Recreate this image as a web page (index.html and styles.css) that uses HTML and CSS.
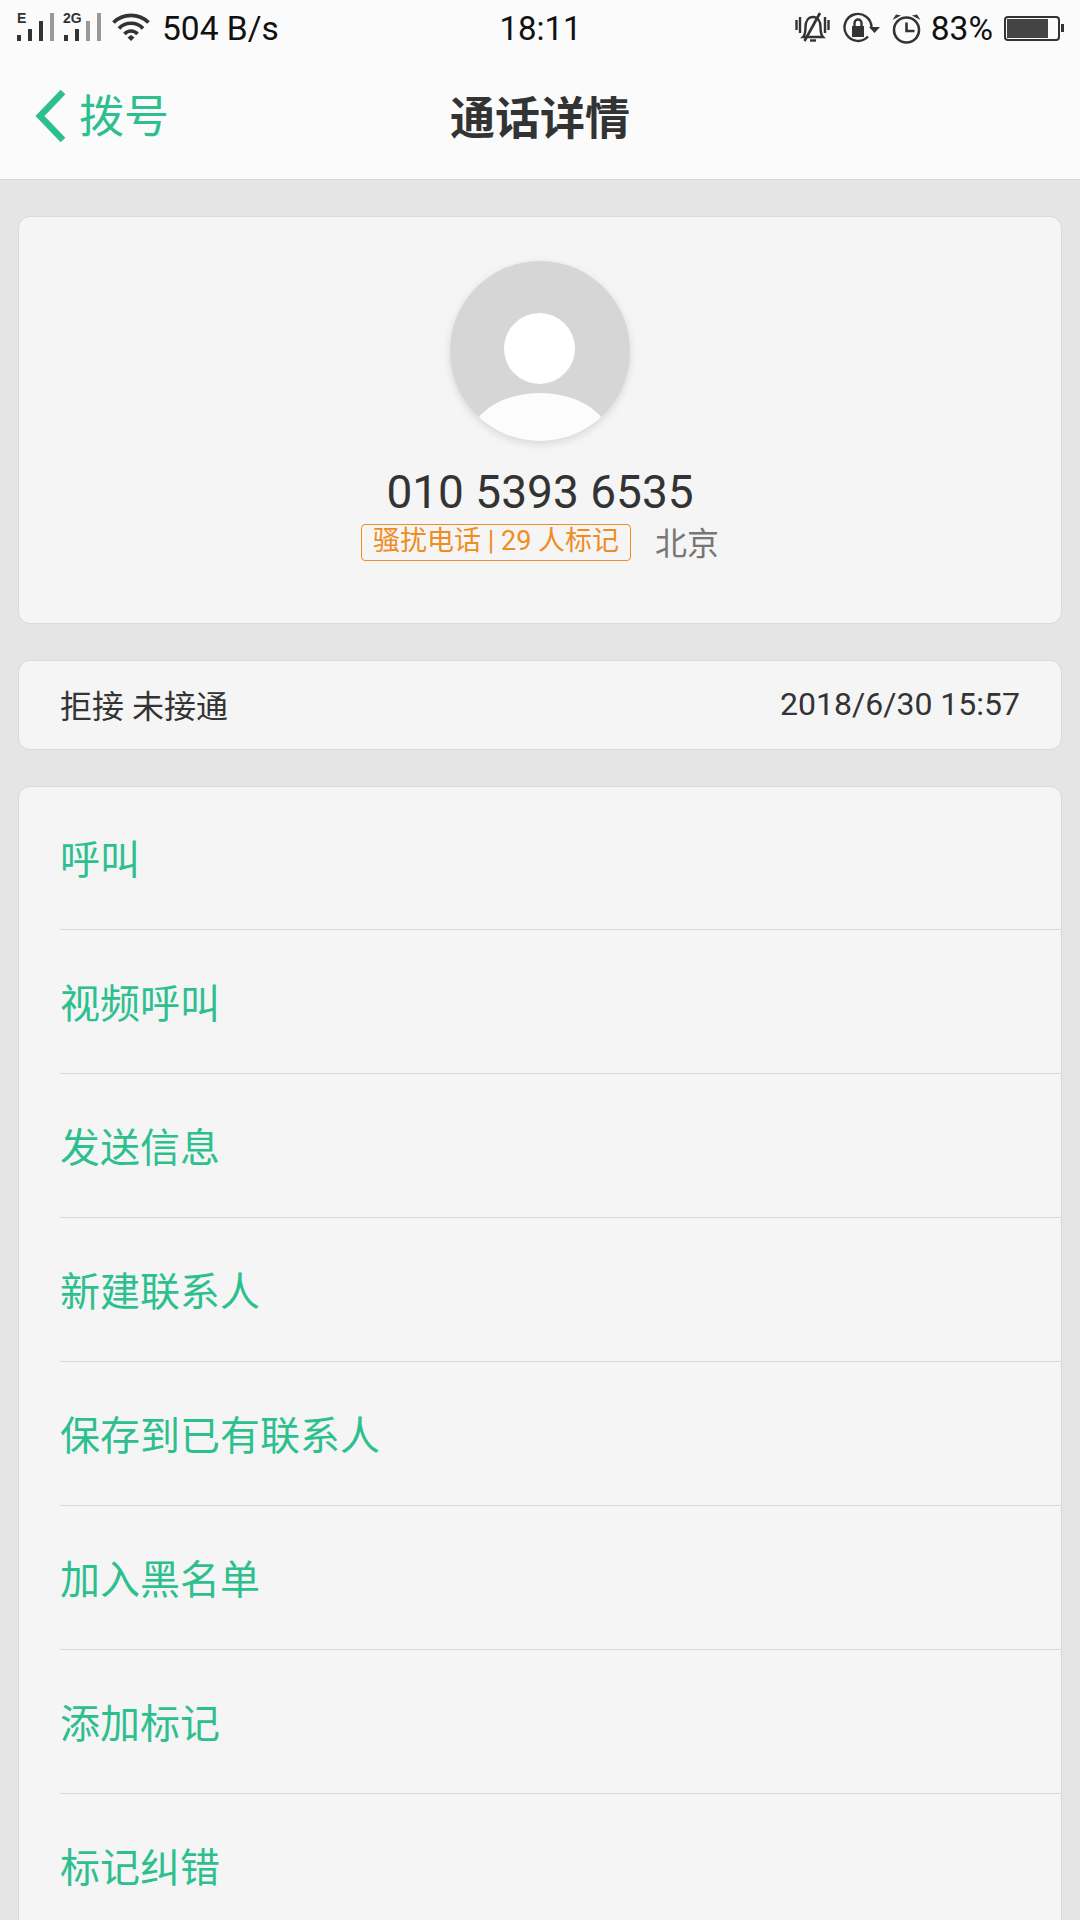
FILE: index.html
```html
<!DOCTYPE html>
<html lang="zh-CN">
  <head>
    <meta charset="utf-8">
    <title>通话详情</title>
    <link rel="stylesheet" href="styles.css">
  </head>
  <body>
    <div class="top">
      <div class="status">
        <div class="status-left">
          <svg width="38" height="40" viewBox="0 -5 38 40">
            <text x="0" y="10" class="sig-label">E</text>
            <rect x="0" y="22" width="4" height="6" fill="#333"/>
            <rect x="11" y="16" width="4" height="12" fill="#333"/>
            <rect x="22" y="8" width="4" height="20" fill="#333"/>
            <rect x="33" y="0" width="4" height="28" fill="#999"/>
          </svg>
          <svg class="sig2" width="38" height="40" viewBox="0 -5 38 40">
            <text x="0" y="10" class="sig-label">2G</text>
            <rect x="1" y="22" width="4" height="6" fill="#333"/>
            <rect x="12" y="16" width="4" height="12" fill="#333"/>
            <rect x="23" y="8" width="4" height="20" fill="#999"/>
            <rect x="34" y="0" width="4" height="28" fill="#999"/>
          </svg>
          <svg class="wifi" width="38" height="30" viewBox="0 0 38 30" fill="none" stroke="#333" stroke-width="3.600">
            <path d="M1.500 9.500C11 0 27 0 36.500 9.500"/>
            <path d="M7 15.500C13 8.500 25 8.500 31 15.500"/>
            <path d="M12.500 21C16 17 22 17 25.500 21"/>
            <path d="M15.500 24.500L19 22L22.500 24.500L19 28Z" fill="#333" stroke="none"/>
          </svg>
          <span class="speed">504 B/s</span>
        </div>
        <span class="clock">18:11</span>
        <div class="status-right">
          <svg width="36" height="32" viewBox="0 0 36 32" fill="none" stroke="#333" stroke-width="2.400">
            <path d="M1.500 8v10M5 5v16M30 5v16M33.500 8v10"/>
            <path d="M8 25c2-2 2.500-5 2.500-10 0-6 3-10 7.500-10s7.500 4 7.500 10c0 5 .5 8 2.500 10z"/>
            <path d="M9.500 29L25 1" stroke-width="2.600"/>
            <path d="M15 28.500h6"/>
          </svg>
          <svg class="rot" width="37" height="32" viewBox="0 0 37 32" fill="none" stroke="#333" stroke-width="2.400">
            <path d="M28.500 15A13.500 13.500 0 1 0 25 24.500"/>
            <path d="M26 15h11l-5.500 6z" fill="#333" stroke="none"/>
            <rect x="9" y="14" width="12" height="11" fill="#333" stroke="none"/>
            <path d="M11.500 14v-3a3.500 3.500 0 0 1 7 0v3"/>
          </svg>
          <svg class="alarm" width="32" height="32" viewBox="0 0 32 32" fill="none" stroke="#333" stroke-width="2.600">
            <circle cx="15.500" cy="18" r="12.500"/>
            <path d="M15.500 10.500v8.500h8"/>
            <path d="M1.500 8l3.500-5.500 5 1zM29.500 8l-3.500-5.500-5 1z" fill="#333" stroke="none"/>
          </svg>
          <span class="percent">83%</span>
          <div class="battery"><div class="battery-fill"></div></div>
          <div class="battery-tip"></div>
        </div>
      </div>
      <div class="nav">
        <div class="back">
          <svg width="32" height="54" viewBox="0 0 32 54" fill="none" stroke="#2dc08e" stroke-width="6.500">
            <path d="M29 3L6 27l23 24"/>
          </svg>
          <span class="back-text">拨号</span>
        </div>
        <h1>通话详情</h1>
      </div>
    </div>

    <div class="content">
      <div class="card profile">
        <div class="avatar">
          <div class="avatar-head"></div>
          <div class="avatar-body"></div>
        </div>
        <div class="number">010 5393 6535</div>
        <div class="tags">
          <span class="tag">骚扰电话 | 29 人标记</span>
          <span class="place">北京</span>
        </div>
      </div>

      <div class="card record">
        <span>拒接 未接通</span>
        <span class="date">2018/6/30 15:57</span>
      </div>

      <div class="card actions">
        <div class="action">呼叫</div>
        <div class="action">视频呼叫</div>
        <div class="action">发送信息</div>
        <div class="action">新建联系人</div>
        <div class="action">保存到已有联系人</div>
        <div class="action">加入黑名单</div>
        <div class="action">添加标记</div>
        <div class="action">标记纠错</div>
      </div>
    </div>
  </body>
</html>
```

FILE: styles.css
```css
* {
  box-sizing: border-box;
}

html,
body {
  height: 1920px;
}

body {
  margin: 0;
  overflow: hidden;
  background-color: #e5e5e5;
  color: #333;
  font-family: Roboto, "Noto Sans CJK SC", sans-serif;
}

.top {
  height: 180px;
  background-color: #fbfbfb;
  border-bottom: 1px solid #d6d6d6;
}

.status {
  height: 56px;
  padding: 0 16px 0 17px;
  display: grid;
  grid-template-columns: 1fr auto 1fr;
  align-items: center;
}

.status-left,
.status-right {
  display: flex;
  align-items: center;
}

.status-right {
  justify-content: flex-end;
}

.sig2 {
  margin-left: 8px;
}

.sig-label {
  font-family: "Liberation Sans", sans-serif;
  font-size: 14px;
  font-weight: bold;
  fill: #333;
}

.wifi {
  margin-left: 11px;
}

.speed {
  margin-left: 12px;
  font-size: 33.5px;
  color: #111;
}

.clock {
  font-size: 33px;
  color: #111;
}

.rot {
  margin-left: 12px;
}

.alarm {
  margin-left: 11px;
}

.percent {
  margin-left: 8px;
  font-size: 33.5px;
  color: #111;
}

.battery {
  margin-left: 11px;
  width: 56px;
  height: 25px;
  padding: 1px;
  border: 2px solid #333;
  border-radius: 4px;
}

.battery-fill {
  width: 41px;
  height: 100%;
  background-color: #444;
}

.battery-tip {
  margin-left: 1px;
  width: 3px;
  height: 8px;
  background-color: #333;
}

.nav {
  position: relative;
  height: 123px;
  padding-bottom: 4px;
  display: flex;
  align-items: center;
  justify-content: center;
}

.back {
  position: absolute;
  left: 34px;
  top: 28px;
  display: flex;
  align-items: center;
  gap: 13px;
  font-size: 45px;
  line-height: 58px;
  color: #2dc08e;
}

.back-text {
  margin-top: 5px;
}

h1 {
  margin: 0;
  font-size: 45px;
  font-weight: bold;
  color: #333;
}

.content {
  padding: 36px 18px 0;
  display: flex;
  flex-direction: column;
  gap: 36px;
}

.card {
  background-color: #f5f5f5;
  border: 1px solid #d9d9d9;
  border-radius: 12px;
}

.profile {
  height: 408px;
  padding-top: 44px;
  display: flex;
  flex-direction: column;
  align-items: center;
}

.avatar {
  position: relative;
  width: 180px;
  height: 180px;
  border-radius: 50%;
  overflow: hidden;
  background-color: #d6d6d6;
  box-shadow: 0 3px 8px rgba(0, 0, 0, 0.12);
  flex: none;
}

.avatar-head {
  position: absolute;
  left: 54px;
  top: 52px;
  width: 71px;
  height: 71px;
  border-radius: 50%;
  background-color: #fff;
}

.avatar-body {
  position: absolute;
  left: 18px;
  top: 132px;
  width: 144px;
  height: 100px;
  border-radius: 50%;
  background-color: #fcfcfc;
}

.number {
  margin-top: 24px;
  font-size: 46px;
  line-height: 54px;
  color: #333;
}

.tags {
  margin-top: -1px;
  display: flex;
  align-items: center;
  gap: 24px;
}

.tag {
  height: 37px;
  padding: 0 11px;
  border: 1px solid #ef8d22;
  border-radius: 4px;
  font-size: 27px;
  line-height: 33px;
  color: #ef8d22;
}

.place {
  margin-bottom: 2px;
  font-size: 32px;
  color: #777;
}

.record {
  height: 90px;
  padding: 0 35px 3px 41px;
  display: flex;
  align-items: center;
  justify-content: space-between;
  font-size: 32px;
}

.date {
  padding-right: 6px;
}

.actions {
  padding-left: 41px;
  height: 1300px;
}

.action {
  height: 144px;
  padding-bottom: 2px;
  display: flex;
  align-items: center;
  border-bottom: 1px solid #d9d9d9;
  font-size: 40px;
  color: #2dc08e;
}

.action:first-child {
  height: 143px;
}
```
